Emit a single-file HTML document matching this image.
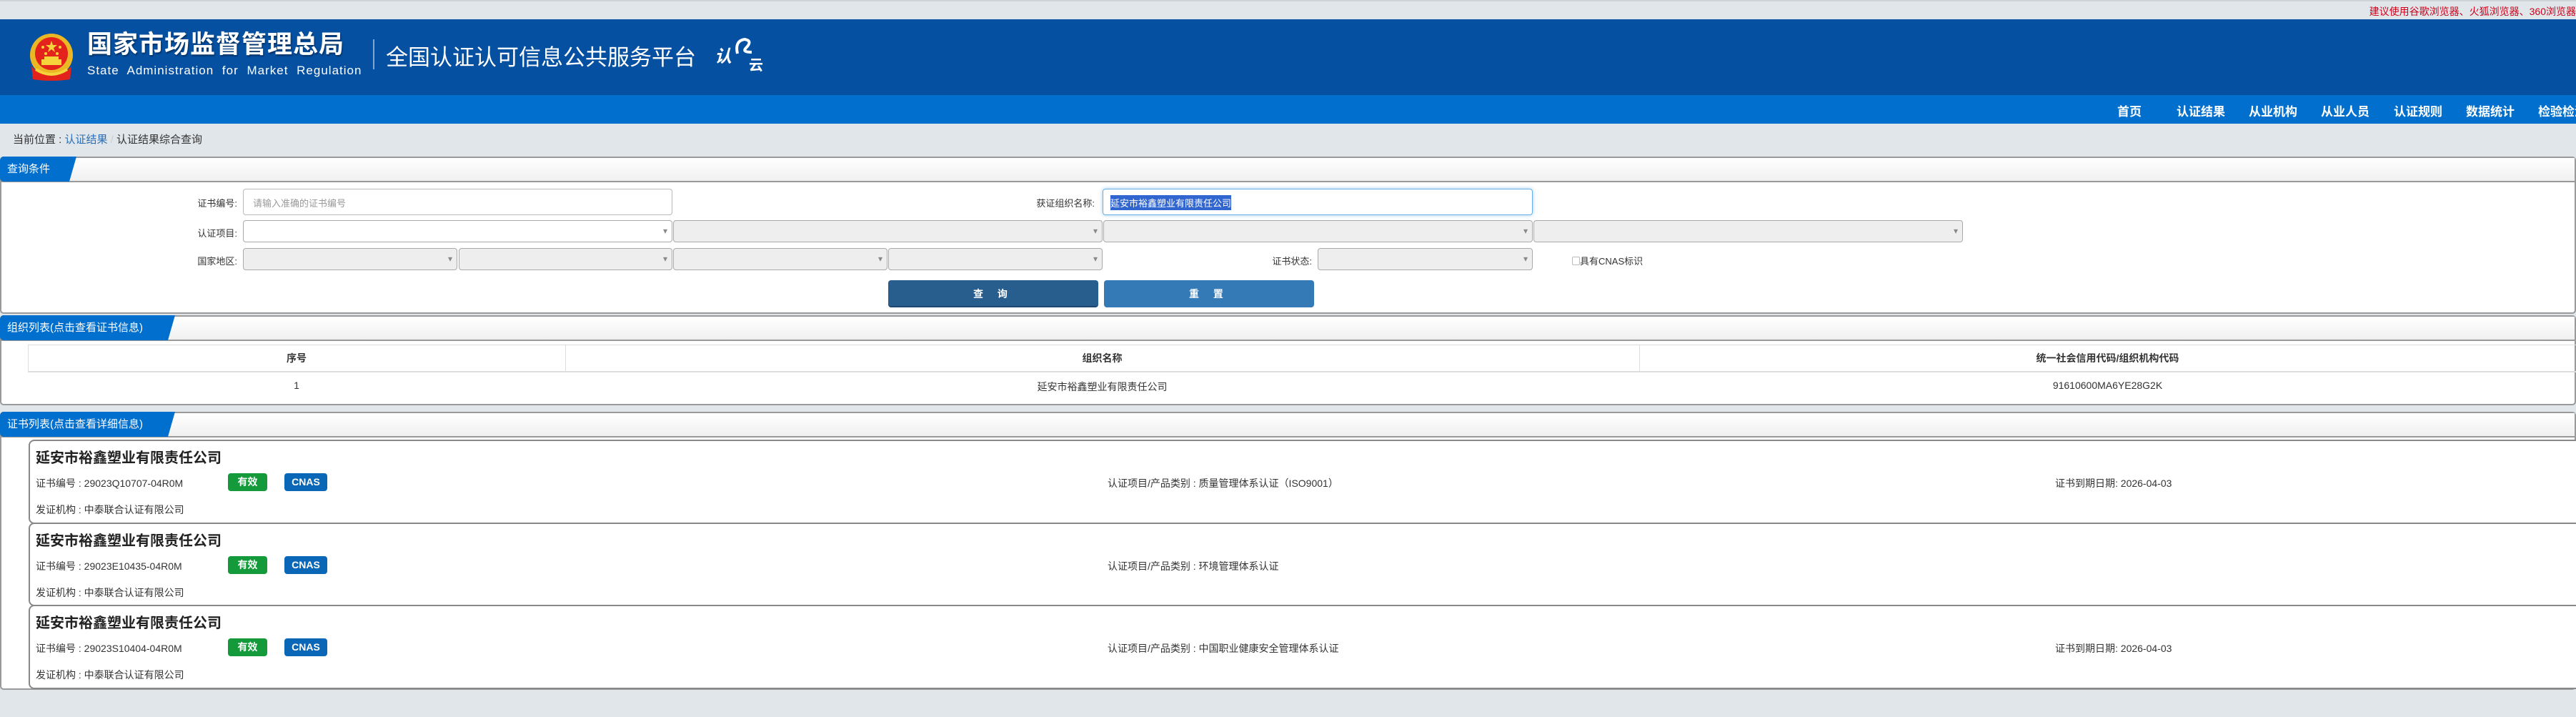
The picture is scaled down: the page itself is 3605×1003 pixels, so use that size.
<!DOCTYPE html>
<html><head><meta charset="utf-8"><style>
*{margin:0;padding:0;box-sizing:border-box}
body{width:3605px;height:1003px;background:#e1e6ea;font-family:"Liberation Sans","Noto Sans CJK SC",sans-serif;color:#333;position:relative;overflow:hidden;font-size:14px}
.abs{position:absolute}
.top{left:0;top:0;width:3605px;height:27px;background:#e1e6ea;border-top:2px solid #d0d4d8}
.warn{right:0;top:4px;color:#d0021b;font-size:14px;white-space:nowrap}
.hdr{left:0;top:27px;width:3605px;height:106px;background:#0650a2}
.nav{left:0;top:133px;width:3605px;height:40px;background:#006fcd}
.nav span{position:absolute;top:9px;color:#fff;font-size:17px;font-weight:bold;white-space:nowrap}
.t1{left:122px;top:14px;color:#fff;font-size:35px;font-weight:bold;letter-spacing:1px;white-space:nowrap;line-height:44px;text-shadow:1px 2px 2px rgba(0,0,0,.4)}
.t2{left:122px;top:62px;color:#fff;font-size:17px;letter-spacing:1px;word-spacing:6px;white-space:nowrap;line-height:20px}
.div{left:522px;top:28px;width:2px;height:42px;background:#7fa6d6}
.t3{left:540px;top:28px;color:#fff;font-size:31px;white-space:nowrap}
.crumb{left:18px;top:184px;font-size:15px;color:#333}
.crumb a{color:#2a6fb5}
.panel{position:absolute;left:0;width:3605px;background:#fff;border:2px solid #9a9a9a;border-radius:5px}
.ph{position:absolute;left:0;top:0;right:0;height:34px;background:linear-gradient(#fff,#f0f0f0);border-bottom:2px solid #9a9a9a}
.tab{position:absolute;left:-2px;top:-2px;height:35px;background:#006fcd;color:#fff;font-size:15px;line-height:35px;padding-left:10px;clip-path:polygon(0 0,100% 0,calc(100% - 10px) 100%,0 100%);border-radius:5px 0 0 5px;white-space:nowrap}
.lbl{position:absolute;font-size:13px;color:#333;text-align:right;white-space:nowrap}
.in{position:absolute;height:37px;border:1.5px solid #bbb;border-radius:4px;background:#fff}
.sel{position:absolute;height:31px;border:1.5px solid #aaa;border-radius:4px;background:#eee}
.sel.w{background:#fff}
.sel:after{content:"▾";position:absolute;right:6px;top:7px;font-size:12px;color:#888}
.btn{position:absolute;top:392px;height:38px;width:294px;border-radius:4px;color:#fff;font-size:14px;font-weight:bold;text-align:center;line-height:38px;letter-spacing:8px}
.card{position:absolute;left:40px;width:3580px;border:2px solid #888;border-radius:8px;background:#fff}
.ct{position:absolute;left:8px;top:7px;font-size:20px;font-weight:bold;color:#222;white-space:nowrap}
.cl{position:absolute;font-size:14px;color:#333;white-space:nowrap}
.bg{position:absolute;color:#fff;font-size:14px;font-weight:bold;border-radius:4px;text-align:center;line-height:25px;height:25px}
.th{position:absolute;top:491px;text-align:center;font-size:14px;font-weight:bold}
.td{position:absolute;top:531px;text-align:center;font-size:14px}
</style></head><body>
<div class="abs top"><div class="abs warn">建议使用谷歌浏览器、火狐浏览器、360浏览器</div></div>
<div class="abs hdr">
<svg class="abs" style="left:38px;top:18px" width="68" height="70" viewBox="0 0 68 70">
<circle cx="34" cy="32" r="30" fill="#e9b824"/><circle cx="34" cy="30" r="23" fill="#e3231b"/>
<polygon points="34,12 36,18 42,18 37,22 39,28 34,24 29,28 31,22 26,18 32,18" fill="#f5d33a"/>
<circle cx="22" cy="21" r="2" fill="#f5d33a"/><circle cx="46" cy="21" r="2" fill="#f5d33a"/><circle cx="26" cy="30" r="2" fill="#f5d33a"/><circle cx="42" cy="30" r="2" fill="#f5d33a"/>
<rect x="20" y="38" width="28" height="8" fill="#f5d33a"/><rect x="24" y="34" width="20" height="4" fill="#f5d33a"/>
<path d="M6 48 Q20 62 34 58 Q48 62 62 48 L60 66 Q34 70 8 66Z" fill="#e3231b"/>
<path d="M12 52 Q34 66 56 52" stroke="#f5d33a" stroke-width="4" fill="none"/>
</svg>
<div class="abs t1">国家市场监督管理总局</div>
<div class="abs t2">State Administration for Market Regulation</div>
<div class="abs div"></div>
<div class="abs t3">全国认证认可信息公共服务平台</div>
<div class="abs" style="left:1000px;top:32px;color:#fff;font-size:24px;font-weight:bold;font-style:italic">认</div>
<svg class="abs" style="left:1026px;top:24px" width="30" height="28"><path d="M6 24 Q2 6 16 4 Q28 6 18 16 Q12 22 26 22" stroke="#fff" stroke-width="4" fill="none"/></svg>
<div class="abs" style="left:1048px;top:48px;color:#fff;font-size:20px;font-weight:bold">云</div>
</div>
<div class="abs nav">
<span style="left:2963px">首页</span><span style="left:3046px">认证结果</span><span style="left:3147px">从业机构</span><span style="left:3248px">从业人员</span><span style="left:3350px">认证规则</span><span style="left:3451px">数据统计</span><span style="left:3552px">检验检测</span>
</div>
<div class="abs crumb">当前位置 : <a>认证结果</a> <span style="color:#ccc">/</span> 认证结果综合查询</div>

<div class="panel" style="top:219px;height:220px"><div class="ph"></div><div class="tab" style="width:107px">查询条件</div></div>
<div class="lbl" style="left:250px;top:274px;width:82px">证书编号:</div>
<div class="in" style="left:340px;top:264px;width:601px"><span style="position:absolute;left:13px;top:9px;color:#999;font-size:13px">请输入准确的证书编号</span></div>
<div class="lbl" style="left:1380px;top:274px;width:152px">获证组织名称:</div>
<div class="in" style="left:1543px;top:264px;width:602px;border-color:#66afe9;box-shadow:0 0 6px rgba(102,175,233,.6)"><span style="position:absolute;left:10px;top:8px;background:#3166d1;color:#fff;font-size:13px;padding:1px 0">延安市裕鑫塑业有限责任公司</span></div>
<div class="lbl" style="left:250px;top:316px;width:82px">认证项目:</div>
<div class="sel w" style="left:340px;top:308px;width:601px"></div>
<div class="sel" style="left:942px;top:308px;width:601px"></div>
<div class="sel" style="left:1544px;top:308px;width:601px"></div>
<div class="sel" style="left:2146px;top:308px;width:601px"></div>
<div class="lbl" style="left:250px;top:355px;width:82px">国家地区:</div>
<div class="sel" style="left:340px;top:347px;width:300px"></div>
<div class="sel" style="left:642px;top:347px;width:299px"></div>
<div class="sel" style="left:942px;top:347px;width:300px"></div>
<div class="sel" style="left:1243px;top:347px;width:300px"></div>
<div class="lbl" style="left:1740px;top:355px;width:96px">证书状态:</div>
<div class="sel" style="left:1844px;top:347px;width:301px"></div>
<div class="lbl" style="left:2200px;top:355px;text-align:left"><span style="display:inline-block;width:11px;height:12px;border:1px solid #bbb;border-radius:2px;vertical-align:-1px"></span>具有CNAS标识</div>
<div class="btn" style="left:1243px;background:#285e8e;border-bottom:2px solid #1d4770">查 询</div>
<div class="btn" style="left:1545px;background:#337ab7">重 置</div>

<div class="panel" style="top:441px;height:126px"><div class="ph"></div><div class="tab" style="width:245px">组织列表(点击查看证书信息)</div></div>
<div class="abs" style="left:39px;top:482px;width:3566px;height:39px;border-top:1px solid #ddd;border-bottom:2px solid #ddd;border-left:1px solid #ddd"></div>
<div class="abs" style="left:791px;top:482px;width:1px;height:39px;background:#ddd"></div>
<div class="abs" style="left:2294px;top:482px;width:1px;height:39px;background:#ddd"></div>
<div class="th" style="left:39px;width:752px">序号</div>
<div class="th" style="left:791px;width:1503px">组织名称</div>
<div class="th" style="left:2294px;width:1311px">统一社会信用代码/组织机构代码</div>
<div class="td" style="left:39px;width:752px">1</div>
<div class="td" style="left:791px;width:1503px">延安市裕鑫塑业有限责任公司</div>
<div class="td" style="left:2294px;width:1311px">91610600MA6YE28G2K</div>

<div class="panel" style="top:576px;height:389px"><div class="ph"></div><div class="tab" style="width:245px">证书列表(点击查看详细信息)</div></div>

<div class="card" style="top:615px;height:118px"><div class="ct">延安市裕鑫塑业有限责任公司</div>
<div class="cl" style="left:8px;top:49px">证书编号 : 29023Q10707-04R0M</div>
<div class="bg" style="left:277px;top:45px;width:55px;background:#149a3a">有效</div>
<div class="bg" style="left:356px;top:45px;width:60px;background:#0a66b6">CNAS</div>
<div class="cl" style="left:8px;top:86px">发证机构 : 中泰联合认证有限公司</div>
<div class="cl" style="left:1508px;top:49px">认证项目/产品类别 : 质量管理体系认证（ISO9001）</div>
<div class="cl" style="left:2834px;top:49px">证书到期日期: 2026-04-03</div></div>

<div class="card" style="top:731px;height:117px"><div class="ct">延安市裕鑫塑业有限责任公司</div>
<div class="cl" style="left:8px;top:49px">证书编号 : 29023E10435-04R0M</div>
<div class="bg" style="left:277px;top:45px;width:55px;background:#149a3a">有效</div>
<div class="bg" style="left:356px;top:45px;width:60px;background:#0a66b6">CNAS</div>
<div class="cl" style="left:8px;top:86px">发证机构 : 中泰联合认证有限公司</div>
<div class="cl" style="left:1508px;top:49px">认证项目/产品类别 : 环境管理体系认证</div></div>

<div class="card" style="top:846px;height:118px"><div class="ct">延安市裕鑫塑业有限责任公司</div>
<div class="cl" style="left:8px;top:49px">证书编号 : 29023S10404-04R0M</div>
<div class="bg" style="left:277px;top:45px;width:55px;background:#149a3a">有效</div>
<div class="bg" style="left:356px;top:45px;width:60px;background:#0a66b6">CNAS</div>
<div class="cl" style="left:8px;top:86px">发证机构 : 中泰联合认证有限公司</div>
<div class="cl" style="left:1508px;top:49px">认证项目/产品类别 : 中国职业健康安全管理体系认证</div>
<div class="cl" style="left:2834px;top:49px">证书到期日期: 2026-04-03</div></div>
</body></html>
